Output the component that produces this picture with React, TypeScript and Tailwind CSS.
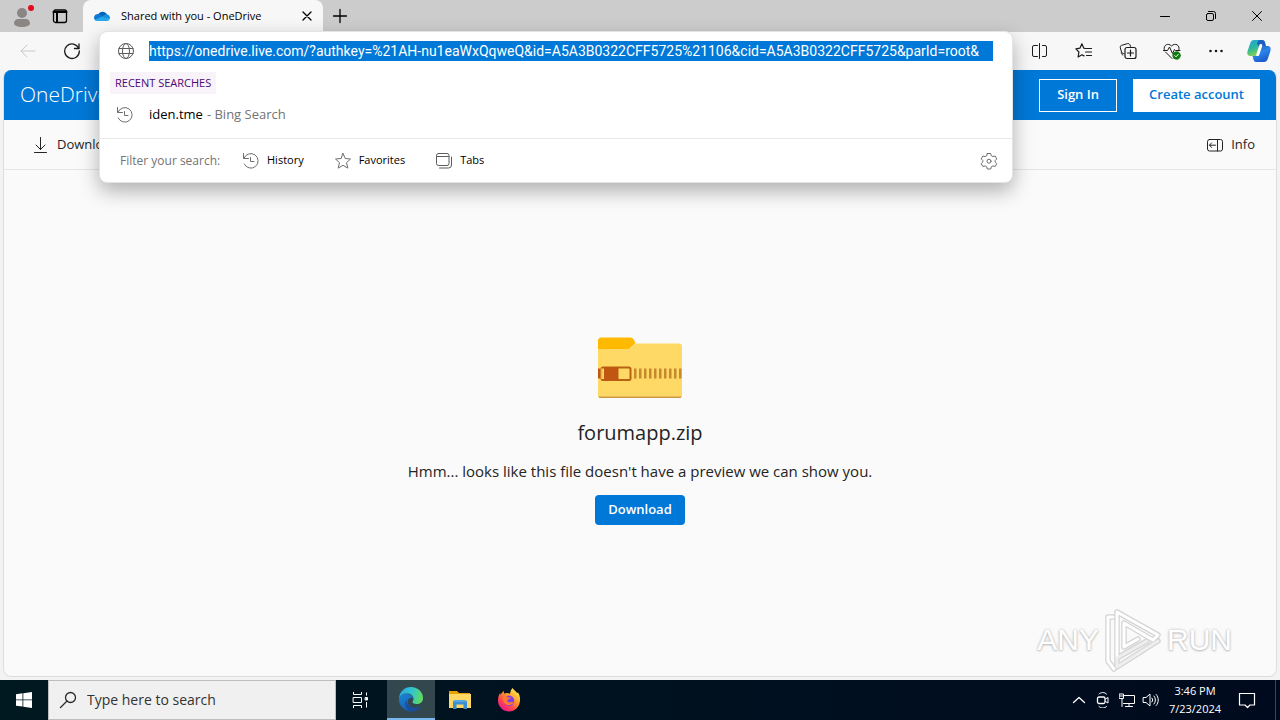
import type { ReactNode } from "react";

type IconProps = { className?: string; size?: number; children: ReactNode };

function Icon({ className = "", size = 16, children }: IconProps) {
  return (
    <svg
      className={`shrink-0 ${className}`}
      width={size}
      height={size}
      viewBox={`0 0 ${size} ${size}`}
      fill="none"
      stroke="currentColor"
      strokeWidth="1"
      strokeLinecap="round"
      strokeLinejoin="round"
      aria-hidden="true"
    >
      {children}
    </svg>
  );
}

function HistoryIcon() {
  return (
    <Icon size={18} className="text-[#6e6e6e]">
      <path d="M1.500 1.500v5h5" />
      <path d="M2 6.200A7.300 7.300 0 1 1 2.200 12" />
      <path d="M8.500 5.500v4H12" />
    </Icon>
  );
}

function OneDriveLogo() {
  return (
    <svg width="18" height="18" viewBox="0 0 18 18" className="shrink-0" aria-hidden="true">
      <path d="M5 7.500A5 5 0 0 1 14.100 8L9 12 1.500 9Z" fill="#0364b8" />
      <path d="M4.500 7a4.300 4.300 0 0 1 3 .8L15 12 3 13.800A3.600 3.600 0 0 1 4.500 7Z" fill="#0f78d4" />
      <path d="M14.100 7.600A3.200 3.200 0 0 1 16.400 12.600L9.600 9.600a4 4 0 0 1 4.500-2Z" fill="#1490df" />
      <path d="m9.600 9.400 6.800 3.300A3 3 0 0 1 14.200 14H4.600a4 4 0 0 1-2.800-1.200Z" fill="#28a8ea" />
    </svg>
  );
}

function CopilotLogo() {
  return (
    <svg width="26" height="26" viewBox="0 0 26 26" className="shrink-0" aria-hidden="true">
      <defs>
        <linearGradient id="cpA" x1="0" y1="0" x2="0.4" y2="1">
          <stop offset="0" stopColor="#1aa6df" />
          <stop offset="0.55" stopColor="#2fb79a" />
          <stop offset="1" stopColor="#86d44c" />
        </linearGradient>
        <linearGradient id="cpB" x1="0" y1="0" x2="0.5" y2="1">
          <stop offset="0" stopColor="#1c56b8" />
          <stop offset="0.5" stopColor="#2a86e8" />
          <stop offset="1" stopColor="#1b5ccf" />
        </linearGradient>
      </defs>
      <path d="M8 2h8c1.600 0 2 1 2.400 2.200L19.500 8h-3.500c-1.700 0-2.500 1-3 2.500L11 16c-.5 1.500-1 2-2.500 2H4.500C1.500 18 .8 15.500 1.600 13L4.300 5C5 3 6.200 2 8 2Z" fill="url(#cpA)" />
      <path d="M14 2h2.500c1.500 0 2.100 1 2.500 2.200L20 8h-4c-1 0-1.700.4-2.200 1.200L11 6c.6-2.200 1-4 3-4Z" fill="#1b5fc0" />
      <path d="M18 24h-8c-1.600 0-2-1-2.400-2.200L6.500 18H10c1.700 0 2.500-1 3-2.500L15 10c.5-1.500 1-2 2.500-2h4c3 0 3.700 2.500 2.900 5l-2.700 8c-.7 2-1.900 3-3.700 3Z" fill="url(#cpB)" />
      <path d="m11.800 16.500 3-9" stroke="#ffffff" strokeWidth="3" strokeLinecap="round" />
    </svg>
  );
}

function ZipFolder() {
  const teeth = [37, 42, 47, 52, 57, 62, 67, 72, 77, 82];
  return (
    <svg width="86" height="62" viewBox="0 0 86 62" aria-hidden="true">
      <path d="M1 4a3.500 3.500 0 0 1 3.500-3.500H33c2 0 3 .8 4 2.500l1.500 3L31 13H1Z" fill="#ffb900" />
      <path d="M1 12h28c4 0 5.500-1.500 7-3.500C37.500 7 38.500 6.500 41 6.500h41.500A2.500 2.500 0 0 1 85 9v49.500a2.500 2.500 0 0 1-2.500 2.500h-79A2.500 2.500 0 0 1 1 58.500Z" fill="#ffd966" />
      <path d="M1.500 59.500c.5 1 1 1.500 2 1.500h79c1 0 1.600-.5 2-1.500Z" fill="#cc9a45" />
      <rect x="1" y="31.500" width="2.500" height="10" fill="#bf5712" />
      {teeth.map((x) => (
        <rect key={x} x={x} y="31.500" width="2.500" height="10" fill="#c68a2c" />
      ))}
      <rect x="4.500" y="30.500" width="29" height="12.500" rx="1.500" fill="#ffd966" stroke="#b8630f" strokeWidth="2" />
      <rect x="7" y="30" width="14.500" height="13.500" fill="#bf5712" />
      <path d="M5 31.500v10.500" stroke="#ffd966" strokeWidth="1.500" />
    </svg>
  );
}

function EdgeLogo() {
  return (
    <svg width="26" height="26" viewBox="0 0 26 26" aria-hidden="true">
      <defs>
        <linearGradient id="edgeTop" x1="0" y1="0.3" x2="1" y2="0.5">
          <stop offset="0" stopColor="#2aa5e2" />
          <stop offset="0.5" stopColor="#30c4cf" />
          <stop offset="1" stopColor="#62dc5c" />
        </linearGradient>
        <linearGradient id="edgeLow" x1="0" y1="0" x2="0.7" y2="1">
          <stop offset="0" stopColor="#1c87d8" />
          <stop offset="1" stopColor="#1155ab" />
        </linearGradient>
      </defs>
      <path d="M1 12.500C1.500 5.500 6.500 1 13 1c7 0 12 5 12 11 0 4-3 6-6.500 6-2.500 0-4-1-4-2 0-.8 1-1.300 1-3.200C15.500 9.500 12.500 7.500 9 7.500c-4 0-6.800 2-8 5Z" fill="url(#edgeTop)" />
      <path d="M1 12.500c1.200-3 4-4.500 7.500-4.500 3.800 0 6.500 2 6.800 4.500-1.200-1-3.300-1-4.600.5-1.700 2-1.200 5.500 1.500 7.500 3 2.200 7.500 2 11-.8A12 12 0 0 1 1 12.500Z" fill="url(#edgeLow)" />
      <path d="M8.500 14c0 5.500 4 8.500 9 8.500 2 0 4-.7 5.700-2.300A12 12 0 0 1 13 25c-5-1-7-7-4.500-11Z" fill="#1a4d9e" />
    </svg>
  );
}

function ExplorerLogo() {
  return (
    <svg width="24" height="20" viewBox="0 0 24 20" aria-hidden="true">
      <path d="M1 1h8l2 2H22v3H1Z" fill="#e9a200" />
      <path d="M1 4h22v14H1Z" fill="#ffd765" />
      <path d="M5 11h14v8h-3.500v-4.500h-7V19H5Z" fill="#3b8fd2" />
      <path d="M6 10h12v2H6Z" fill="#57a9e4" />
    </svg>
  );
}

function FirefoxLogo() {
  return (
    <svg width="24" height="24" viewBox="0 0 24 24" aria-hidden="true">
      <defs>
        <linearGradient id="foxBody" x1="0.85" y1="0.05" x2="0.2" y2="0.95">
          <stop offset="0" stopColor="#fff14f" />
          <stop offset="0.4" stopColor="#ff9a2c" />
          <stop offset="0.7" stopColor="#ff4650" />
          <stop offset="1" stopColor="#e8158c" />
        </linearGradient>
      </defs>
      <path d="M15.500 0c1 2 3.500 3.200 4.500 5l1-.5c1.500 2 2.300 5 2 8.500A11 11 0 0 1 12 23.500 11 11 0 0 1 1 12.500C1 9 2 6.500 3.200 4.800L3.500 7c1-2 1.800-3 3.300-4l.2 2.500c2-.8 4-.8 6 .2C13.500 3.500 14 1.500 15.500 0Z" fill="url(#foxBody)" />
      <circle cx="12" cy="12.800" r="5.200" fill="#7a3ff0" />
      <path d="M5.500 8.500c2-.8 4-.3 5.500 1h3c-.3 1.500-2.500 1.500-3.500 2.500-.8 1 .3 2.800 2.500 2.300 1.500-.3 2.500-.5 3.500 0-1.500 3-5.500 4-8.300 1.700C6 14 5 11 5.500 8.500Z" fill="#ff7a2e" />
    </svg>
  );
}

function TitleBar() {
  return (
    <header className="flex h-8 items-center bg-[#cccccc] text-black">
      <button type="button" aria-label="Profile" className="flex h-8 w-11 items-center justify-center">
        <svg width="24" height="24" viewBox="0 0 24 24" aria-hidden="true">
          <circle cx="12" cy="9" r="5" fill="#8b8583" />
          <path d="M4 19.500c0-3 2-4.500 4-4.500h8c2 0 4 1.500 4 4.500 0 2-4 3.500-8 3.500s-8-1.500-8-3.500Z" fill="#8b8583" />
          <circle cx="21" cy="4" r="3" fill="#e00b1c" />
        </svg>
      </button>
      <button type="button" aria-label="Tab actions" className="flex h-8 w-8 items-center justify-center">
        <Icon>
          <rect x="1.500" y="2" width="13" height="12.500" rx="2" strokeWidth="1.300" />
          <path d="M1.500 4h13M5 5v9" strokeWidth="2" />
        </Icon>
      </button>
      <div className="ml-[7px] flex h-8 w-60 items-center rounded-t-lg bg-[#f7f7f7] px-2.5">
        <OneDriveLogo />
        <span className="ml-2.5 flex-1 text-[11px] whitespace-nowrap">Shared with you - OneDrive</span>
        <button type="button" aria-label="Close tab" className="flex size-3 items-center justify-center">
          <Icon>
            <path d="m4 4 8 8M12 4l-8 8" strokeWidth="1.300" />
          </Icon>
        </button>
      </div>
      <button type="button" aria-label="New tab" className="flex h-8 w-[34px] items-center justify-center">
        <Icon>
          <path d="M8 1.500v13M1.500 8h13" strokeWidth="1.300" />
        </Icon>
      </button>
      <div className="ml-auto flex">
        <button type="button" aria-label="Minimize" className="flex h-8 w-[46px] items-center justify-center">
          <Icon><path d="M3.500 8.500h9" /></Icon>
        </button>
        <button type="button" aria-label="Restore" className="flex h-8 w-[46px] items-center justify-center">
          <Icon>
            <rect x="3.500" y="5.500" width="7" height="7" rx="1.500" />
            <path d="M5.500 3.500h5a2 2 0 0 1 2 2v5" />
          </Icon>
        </button>
        <button type="button" aria-label="Close" className="flex h-8 w-[46px] items-center justify-center">
          <Icon><path d="m3.500 3.500 9 9M12.500 3.500l-9 9" /></Icon>
        </button>
      </div>
    </header>
  );
}

function ToolButton({ label, children }: { label: string; children: ReactNode }) {
  return (
    <button type="button" aria-label={label} className="flex h-8 w-11 items-center justify-center">
      {children}
    </button>
  );
}

function ToolBar() {
  return (
    <div className="flex h-[38px] items-center bg-[#f7f7f7] pl-1.5 text-[#1b1b1b]">
      <ToolButton label="Back">
        <Icon className="text-[#c9c9c9]">
          <path d="M15 8H1M7 2 1 8l6 6" />
        </Icon>
      </ToolButton>
      <ToolButton label="Refresh">
        <Icon size={18}>
          <path d="M15.800 6.500A7.300 7.300 0 1 0 16.300 9" strokeWidth="1.300" />
          <path d="M16 2v4.500h-4.500" strokeWidth="1.300" />
        </Icon>
      </ToolButton>
      <div className="ml-auto flex">
        <ToolButton label="Split screen">
          <Icon size={18}>
            <path d="M6.500 3.500H3a1.500 1.500 0 0 0-1.500 1.500v8A1.500 1.500 0 0 0 3 14.500h3.500M11.500 3.500H14A1.500 1.500 0 0 1 15.500 5v8a1.500 1.500 0 0 1-1.500 1.500h-2.500M8.500 1.500v15" />
          </Icon>
        </ToolButton>
        <ToolButton label="Favorites list">
          <Icon size={18}>
            <path d="m10.500 6.500-1.700-.3L6.900 1.800 4.900 6.200.9 6.800 3.900 10l-.8 5L7 12.800l2 1.100M11 6.500h5.500M10.500 10h6M11.500 13.500h5" strokeWidth="1.200" />
          </Icon>
        </ToolButton>
        <ToolButton label="Collections">
          <Icon size={18}>
            <path d="M5 11.500H4.500a2 2 0 0 1-2-1.500L1.300 5.800A2 2 0 0 1 2.700 3.300L8.500 1.600a2 2 0 0 1 2.300 1l.8 1.900M4 13c-1-.2-1.500-1-1.700-2" />
            <rect x="6" y="5.500" width="11" height="11" rx="2" strokeWidth="1.200" />
            <path d="M11.500 8v6M8.500 11h6" strokeWidth="1.200" />
          </Icon>
        </ToolButton>
        <ToolButton label="Browser essentials">
          <Icon size={18}>
            <path d="M1.200 7.500C.3 3 5 .5 8.500 4 12 .5 17.500 3 15.800 8M2.500 10l6.500 6.500" />
            <path d="M.5 8.500h4L6.500 5l3 6.500 2-4 1 1H17" />
            <circle cx="13.500" cy="13.500" r="3.700" fill="#107c10" stroke="#107c10" />
            <path d="m11.800 13.600 1.200 1.200 2.300-2.400" stroke="#fff" />
          </Icon>
        </ToolButton>
        <ToolButton label="Settings and more">
          <Icon>
            <g fill="currentColor" stroke="none">
              <circle cx="2.500" cy="8" r="1.300" />
              <circle cx="8" cy="8" r="1.300" />
              <circle cx="13.500" cy="8" r="1.300" />
            </g>
          </Icon>
        </ToolButton>
        <button type="button" aria-label="Copilot" className="flex h-8 w-[42px] items-center justify-center">
          <CopilotLogo />
        </button>
      </div>
    </div>
  );
}

function FilterButton({ label, icon }: { label: string; icon: ReactNode }) {
  return (
    <button type="button" className="flex items-center gap-[7px] text-[11px] text-black">
      {icon}
      {label}
    </button>
  );
}

function AddressDropdown() {
  return (
    <div className="absolute top-[31px] right-[267px] left-[99px] rounded-lg border border-[#e4e4e4] bg-white shadow-[0_8px_20px_rgba(0,0,0,0.30)]">
      <div className="flex h-[38px] items-center pr-[19px] pl-[17px]">
        <Icon size={18} className="text-[#5c5c5c]">
          <circle cx="9" cy="9" r="7.500" />
          <ellipse cx="9" cy="9" rx="3.500" ry="7.500" />
          <path d="M2 6.500h14M2 11.500h14" />
        </Icon>
        <input
          type="text"
          aria-label="Address bar"
          readOnly
          value="https://onedrive.live.com/?authkey=%21AH-nu1eaWxQqweQ&id=A5A3B0322CFF5725%21106&cid=A5A3B0322CFF5725&parId=root&"
          className="ml-3.5 h-5 min-w-0 flex-1 bg-[#0078d7] font-[Roboto,sans-serif] text-sm leading-5 text-white outline-none"
        />
      </div>
      <h2 className="mt-0.5 ml-2.5 w-fit bg-[#f8f2f9] px-[5px] text-[11px] leading-[22px] text-[#4b0a77]">RECENT SEARCHES</h2>
      <button type="button" className="flex h-[42px] w-full items-center pl-4 text-[13px]">
        <HistoryIcon />
        <span className="ml-[15px] text-black">iden.tme</span>
        <span className="ml-1 text-[#737373]">- Bing Search</span>
      </button>
      <div className="mt-0.5 flex h-11 items-center border-t border-[#e8e8e8] pr-3.5 pl-5">
        <span className="w-[122px] text-xs text-[#737373]">Filter your search:</span>
        <div className="flex gap-[30px]">
          <FilterButton label="History" icon={<HistoryIcon />} />
          <FilterButton
            label="Favorites"
            icon={
              <Icon size={18} className="text-[#6e6e6e]">
                <path d="m9 1.500 2.200 5 5.300.5-4 3.700 1.300 5.400L9 13.300l-4.800 2.800 1.300-5.400L1.500 7l5.300-.5Z" />
              </Icon>
            }
          />
          <FilterButton
            label="Tabs"
            icon={
              <Icon size={18} className="text-[#5c5c5c]">
                <rect x="1.500" y="1.500" width="12.500" height="12" rx="2" />
                <path d="M1.500 4.500H14M4.500 16h9a3 3 0 0 0 3-3V5" />
              </Icon>
            }
          />
        </div>
        <button type="button" aria-label="Search settings" className="ml-auto">
          <Icon size={18} className="text-[#6e6e6e]">
            <path d="M7.300 1.500h3.400l.6 2.200 1.600.9 2.200-.6 1.700 2.900-1.600 1.600v1.500l1.600 1.600-1.700 2.900-2.200-.6-1.600.9-.6 2.200H7.300l-.6-2.200-1.600-.9-2.200.6-1.700-2.900L2.800 10V8.500L1.200 6.900 2.900 4l2.200.6 1.600-.9Z" />
            <circle cx="9" cy="9.200" r="2" />
          </Icon>
        </button>
      </div>
    </div>
  );
}

function Watermark() {
  return (
    <div className="absolute right-11 bottom-1 flex items-center gap-1 font-['Liberation_Sans_Narrow','Liberation_Sans',sans-serif] text-[30px] leading-none text-white [text-shadow:0_0_3px_#b8b8b8,0_1px_2px_#c4c4c4]">
      <span>ANY</span>
      <svg width="60" height="64" viewBox="0 0 60 64" aria-hidden="true">
        <g fill="none" strokeLinejoin="round" strokeLinecap="round">
          <path d="M10 9H5v44l6 8M14 4v46M14 4l41 23-5 5L21 15v24l14-8M55 33 14 59V50l30-17" stroke="#d4d4d4" strokeWidth="5.500" />
          <path d="M10 9H5v44l6 8M14 4v46M14 4l41 23-5 5L21 15v24l14-8" stroke="#ffffff" strokeWidth="3" />
          <path d="M55 33 14 59V50l30-17" stroke="#eeeeee" strokeWidth="3" />
        </g>
      </svg>
      <span>RUN</span>
    </div>
  );
}

function OneDrivePage() {
  return (
    <main className="relative mx-[3px] mb-[3px] flex flex-1 flex-col overflow-hidden rounded-lg border border-t-0 border-[#dedede] bg-[#fafafa]">
      <div className="flex h-[50px] items-center justify-between bg-[#0078d7] px-4">
        <a href="#onedrive" className="text-[21px] font-light text-white">OneDrive</a>
        <div className="flex gap-4 text-[13px] font-semibold">
          <button type="button" className="h-[33px] min-w-[78px] border border-white px-4 text-white">Sign In</button>
          <button type="button" className="h-[33px] bg-white px-4 text-[#0078d7]">Create account</button>
        </div>
      </div>
      <div className="flex h-[50px] items-center justify-between border-b border-[#e6e6e6] pr-[21px] pl-7 text-[13px] text-[#242424]">
        <button type="button" className="flex items-center gap-[7px]">
          <Icon size={18}>
            <path d="M8.500 1.500v12M4 9l4.500 4.500L13 9M2.500 16.500h12" />
          </Icon>
          Download
        </button>
        <button type="button" className="flex items-center gap-2">
          <Icon>
            <rect x=".5" y="2.500" width="15" height="11.500" rx="2" />
            <path d="M10.500 2.500V14M8.500 8.200h-6M4.500 6l-2 2.200 2 2.200" />
          </Icon>
          Info
        </button>
      </div>
      <section className="flex flex-1 flex-col items-center justify-center pt-4 text-[#242424]">
        <ZipFolder />
        <h1 className="mt-5 text-xl leading-7">forumapp.zip</h1>
        <p className="mt-3 text-[15px] leading-6">Hmm... looks like this file doesn't have a preview we can show you.</p>
        <button type="button" className="mt-3 h-[30px] rounded bg-[#0078d7] px-[13px] text-[13px] font-semibold text-white">Download</button>
      </section>
      <Watermark />
    </main>
  );
}

function TaskBar() {
  return (
    <footer className="flex h-10 items-stretch bg-gradient-to-r from-[#001820] to-[#000a1e] text-white">
      <button type="button" aria-label="Start" className="flex w-12 items-center justify-center">
        <svg width="16" height="16" viewBox="0 0 16 16" fill="#fff" aria-hidden="true">
          <path d="M0 2.200 6.500 1.300v6.200H0ZM7.300 1.200 16 0v7.500H7.300ZM0 8.300h6.500v6.300L0 13.700ZM7.300 8.300H16V16l-8.700-1.200Z" />
        </svg>
      </button>
      <label className="flex w-72 items-center border border-[#bdbdbd] bg-[#f0f0f0] pl-2.5 text-[#2b2b2b]">
        <Icon size={18}>
          <circle cx="11.500" cy="6.500" r="5" strokeWidth="1.300" />
          <path d="M8 10 1.500 16.500" strokeWidth="1.300" />
        </Icon>
        <input
          type="search"
          aria-label="Type here to search"
          placeholder="Type here to search"
          className="ml-2.5 min-w-0 flex-1 bg-transparent text-sm outline-none placeholder:text-[#333333]"
        />
      </label>
      <button type="button" aria-label="Task view" className="flex w-[51px] items-center justify-center pr-1">
        <Icon size={18}>
          <path d="M2.500 1v2.500h8V1M2.500 17v-2.500h8V17M15.500 1.500v3M15.500 11v5.500" strokeLinecap="butt" />
          <rect x="2.500" y="6.500" width="8" height="5" />
          <rect x="14.500" y="6.500" width="2" height="2.500" fill="currentColor" />
        </Icon>
      </button>
      <button type="button" aria-label="Microsoft Edge" className="flex w-12 items-center justify-center border-b-2 border-[#76b9ed] bg-[#33474e]">
        <EdgeLogo />
      </button>
      <button type="button" aria-label="File Explorer" className="flex w-[49px] items-center justify-center">
        <ExplorerLogo />
      </button>
      <button type="button" aria-label="Firefox" className="flex w-[49px] items-center justify-center">
        <FirefoxLogo />
      </button>
      <div className="ml-auto flex items-center">
        <button type="button" aria-label="Show hidden icons" className="flex w-6 justify-center">
          <Icon><path d="m2.500 10.500 5.500-5 5.500 5" strokeWidth="1.300" /></Icon>
        </button>
        <button type="button" aria-label="Meet now" className="flex w-6 justify-center">
          <Icon>
            <rect x="2.500" y="5" width="7.500" height="6.500" rx="1.500" strokeWidth="1.300" />
            <path d="m10.500 7 2.500-1.500v5.500l-2.500-1.500M4 2C6 0 9.500 0 11.500 2M4 14.500c2 2 5.500 2 7.500 0" />
          </Icon>
        </button>
        <button type="button" aria-label="Network" className="flex w-6 justify-center">
          <Icon>
            <path d="M5.500 3.500h10v8H4.500M10 11.500v3M6.500 14.500h7M3 6.500v8M.5 2h4v4.500h-4ZM.5 4h4" />
          </Icon>
        </button>
        <button type="button" aria-label="Volume" className="flex w-6 justify-center">
          <Icon size={18}>
            <path d="M1.500 6.500H4l4-3.500v12l-4-3.500H1.500ZM10 7a3 3 0 0 1 0 4M12 5a6 6 0 0 1 0 8M14.200 3.500c2.800 3 2.800 8 0 11" />
          </Icon>
        </button>
        <div className="w-16 text-center text-[11px] leading-[18px] whitespace-nowrap">
          <time className="block">3:46 PM</time>
          <time className="block">7/23/2024</time>
        </div>
        <button type="button" aria-label="Notifications" className="mr-1 flex h-10 w-[49px] items-center justify-center border-r border-[#3c4552] pr-2">
          <Icon size={18}>
            <path d="M1.500 2.500h15v11.500H12l-2.500 2.500L7 14H1.500Z" strokeWidth="1.200" />
          </Icon>
        </button>
      </div>
    </footer>
  );
}

export default function App() {
  return (
    <div className="relative flex min-h-screen flex-col bg-[#f3f3f3] font-['Open_Sans','Noto_Sans',sans-serif]">
      <TitleBar />
      <ToolBar />
      <OneDrivePage />
      <TaskBar />
      <AddressDropdown />
    </div>
  );
}
